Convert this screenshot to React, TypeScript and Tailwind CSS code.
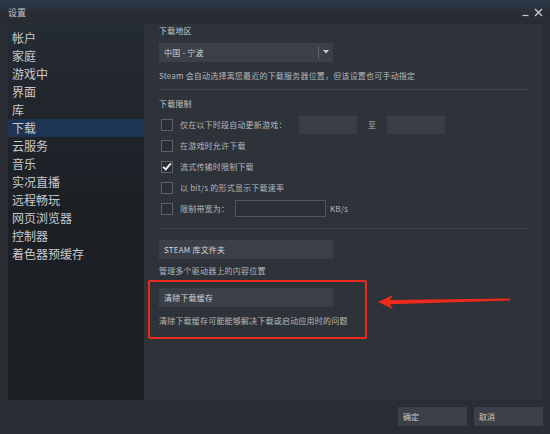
import React from "react";

const font = { fontFamily: '"Noto Sans CJK SC", "Noto Sans", sans-serif' };

const sideItems = [
  "帐户",
  "家庭",
  "游戏中",
  "界面",
  "库",
  "下载",
  "云服务",
  "音乐",
  "实况直播",
  "远程畅玩",
  "网页浏览器",
  "控制器",
  "着色器预缓存",
];

function Check({ checked }: { checked?: boolean }) {
  return (
    <div className="ml-[2px] w-[12px] h-[12px] border border-[#5d6168] bg-[#2a2d33] flex items-center justify-center shrink-0">
      {checked && (
        <svg width="10" height="9" viewBox="0 0 10 9">
          <path d="M1.2 4.8 L3.8 7.4 L8.8 1.4" stroke="#f2f2f2" strokeWidth="1.8" fill="none" />
        </svg>
      )}
    </div>
  );
}

export default function App() {
  return (
    <div
      className="w-[550px] h-[434px] bg-[#2a2d33] flex flex-col relative overflow-hidden text-[#b4b8bc]"
      style={font}
    >
      {/* title bar */}
      <div className="h-[24px] shrink-0 flex items-center justify-between pl-[8px] pr-[7px] bg-gradient-to-b from-[#2d3a4b] via-[#292e36] to-[#282b31]">
        <span className="text-[9px] text-[#c0c4c8] leading-none">设置</span>
        <div className="flex items-center gap-[5px]">
          <svg width="7" height="10" viewBox="0 0 7 10">
            <path d="M0.5 8.5 H6.5" stroke="#c8ccd0" strokeWidth="1.2" />
          </svg>
          <svg width="9" height="9" viewBox="0 0 9 9">
            <path d="M1 1 L8 8 M8 1 L1 8" stroke="#c8ccd0" strokeWidth="1.3" />
          </svg>
        </div>
      </div>

      {/* body */}
      <div className="flex h-[376px] shrink-0 px-[8px]">
        <aside className="w-[136px] shrink-0 bg-gradient-to-b from-[#252b34] via-[#1c1f24] to-[#1b1e22] pt-[5px]">
          {sideItems.map((it) => (
            <div
              key={it}
              className={
                "h-[18px] flex items-center pl-[4px] text-[12px] leading-none text-[#c8cacd] " +
                (it === "下载" ? "bg-[#1d3452]" : "")
              }
            >
              {it}
            </div>
          ))}
        </aside>

        <main className="flex-1 bg-[#2e3239] relative pl-[15px] flex flex-col text-[8px] leading-[12px] tracking-[0.2px]">
          <div className="mt-[1px] h-[12px] text-[#c4c8cc]">下载地区</div>

          <div className="mt-[6px] w-[174px] h-[19px] bg-[#3b3f47] flex items-center pl-[5px] text-[#d0d3d6] relative">
            <span>中国 - 宁波</span>
            <div className="absolute left-[159px] top-[3px] w-px h-[13px] bg-[#60646b]" />
            <svg className="absolute left-[164px] top-[7px]" width="6" height="4" viewBox="0 0 6 4">
              <path d="M0 0 H6 L3 3.5 Z" fill="#c8ccd0" />
            </svg>
          </div>

          <div className="mt-[8px] h-[12px] whitespace-nowrap">
            Steam 会自动选择离您最近的下载服务器位置，但该设置也可手动指定
          </div>

          <div className="mt-[7px] w-[369px] h-px bg-[#40444b]" />

          <div className="mt-[8px] h-[12px] text-[#c4c8cc]">下载限制</div>

          <div className="mt-[4px] flex flex-col">
            <div className="h-[21px] flex items-center">
              <Check />
              <span className="ml-[7px] w-[119px] whitespace-nowrap">仅在以下时段自动更新游戏：</span>
              <div className="w-[58px] h-[18px] bg-[#3a3e46]" />
              <span className="w-[30px] text-center">至</span>
              <div className="w-[58px] h-[18px] bg-[#3a3e46]" />
            </div>
            <div className="h-[21px] flex items-center">
              <Check />
              <span className="ml-[7px]">在游戏时允许下载</span>
            </div>
            <div className="h-[21px] flex items-center">
              <Check checked />
              <span className="ml-[7px]">流式传输时限制下载</span>
            </div>
            <div className="h-[21px] flex items-center">
              <Check />
              <span className="ml-[7px]">以 bit/s 的形式显示下载速率</span>
            </div>
            <div className="h-[21px] flex items-center">
              <Check />
              <span className="ml-[7px] w-[55px] whitespace-nowrap">限制带宽为：</span>
              <div className="w-[91px] h-[17px] border border-[#50555d] bg-[#2c3036]" />
              <span className="ml-[4px]">KB/s</span>
            </div>
          </div>

          <div className="mt-[9px] w-[369px] h-px bg-[#40444b]" />

          <div className="mt-[11px] w-[174px] h-[19px] bg-[#3b3f47] flex items-center pl-[5px] text-[#d0d3d6]">
            STEAM 库文件夹
          </div>
          <div className="mt-[6px] h-[12px]">管理多个驱动器上的内容位置</div>

          <div className="mt-[11px] w-[174px] h-[19px] bg-[#3b3f47] flex items-center pl-[5px] text-[#d0d3d6]">
            清除下载缓存
          </div>
          <div className="mt-[8px] h-[12px]">清除下载缓存可能能够解决下载或启动应用时的问题</div>

          {/* red annotation box */}
          <div className="absolute left-[4px] top-[256px] w-[219px] h-[59px] border-2 border-[#ea2a1e] rounded-[2px]" />
        </main>
      </div>

      {/* footer buttons */}
      <div className="flex-1 flex justify-end items-start pt-[7px] pr-[7px] gap-[7px] text-[8px] leading-none text-[#c8ccd0]">
        <div className="w-[69px] h-[19px] bg-[#3b3f47] flex items-center pl-[5px]">确定</div>
        <div className="w-[69px] h-[19px] bg-[#3b3f47] flex items-center pl-[5px]">取消</div>
      </div>

      {/* red arrow annotation */}
      <svg
        className="absolute left-[370px] top-[290px]"
        width="145"
        height="22"
        viewBox="0 0 145 22"
      >
        <polygon points="8,12 23,5 20,10 140,8.6 140,10.6 20,14.2 23,19" fill="#f0291d" />
      </svg>
    </div>
  );
}
